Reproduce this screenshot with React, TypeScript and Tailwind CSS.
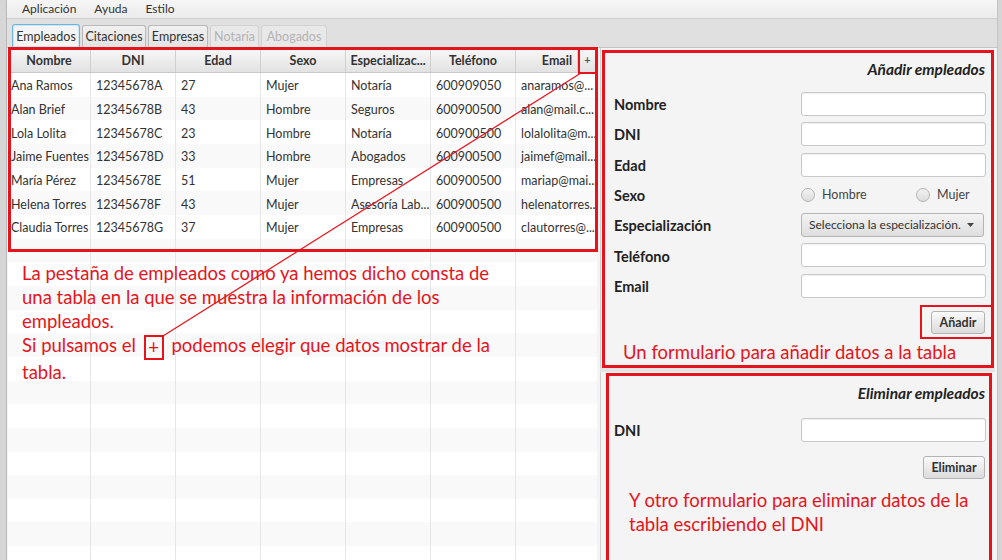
import React from "react";

const rows: string[][] = [
  ["Ana Ramos", "12345678A", "27", "Mujer", "Notaría", "600909050", "anaramos@..."],
  ["Alan Brief", "12345678B", "43", "Hombre", "Seguros", "600900500", "alan@mail.c..."],
  ["Lola Lolita", "12345678C", "23", "Hombre", "Notaría", "600900500", "lolalolita@m..."],
  ["Jaime Fuentes", "12345678D", "33", "Hombre", "Abogados", "600900500", "jaimef@mail..."],
  ["María Pérez", "12345678E", "51", "Mujer", "Empresas", "600900500", "mariap@mai..."],
  ["Helena Torres", "12345678F", "43", "Mujer", "Asesoría Lab...", "600900500", "helenatorres..."],
  ["Claudia Torres", "12345678G", "37", "Mujer", "Empresas", "600900500", "clautorres@..."],
];

const colW = [83, 85, 85, 85, 85, 85, 81];
const headers = ["Nombre", "DNI", "Edad", "Sexo", "Especializac...", "Teléfono"];

const RED = "#e5141c";

function TextField() {
  return (
    <div className="w-[185px] h-[24px] bg-white border border-[#c8c8c8] rounded-[3px] shadow-[inset_0_1px_1px_rgba(0,0,0,0.06)]" />
  );
}

function Btn({ children, w }: { children: React.ReactNode; w: string }) {
  return (
    <div
      className={`${w} h-[23px] flex items-center justify-center pt-[1px] rounded-[3px] border border-[#b3b3b3] bg-gradient-to-b from-[#fafafa] to-[#dcdcdc] text-[12.5px] font-bold text-[#333]`}
    >
      {children}
    </div>
  );
}

function Radio({ label, w }: { label: string; w?: string }) {
  return (
    <div className={`flex items-center gap-[7px] ${w ?? ""}`}>
      <div className="w-[14px] h-[14px] rounded-full border border-[#b5b5b5] bg-gradient-to-b from-[#f2f2f2] to-[#dcdcdc]" />
      <span className="text-[12.5px] text-[#444]">{label}</span>
    </div>
  );
}

function FormRow({ label, children }: { label: string; children: React.ReactNode }) {
  return (
    <div className="flex items-center h-[24px] mt-[6.3px] first:mt-0">
      <div className="w-[187px] pt-[2px] text-[14.5px] font-bold text-[#222]">{label}</div>
      {children}
    </div>
  );
}

export default function App() {
  const bodyRows = Array.from({ length: 21 }, (_, i) => rows[i] ?? null);
  return (
    <div className="relative w-[1002px] h-[560px] overflow-hidden flex bg-[#f4f4f4] font-['Lato',sans-serif] text-[#333]">
      {/* left window frame */}
      <div className="w-[7px] h-full bg-[#d6d6d6] border-r border-[#b9b9b9]" />

      <div className="w-[990px] h-full flex flex-col">
        {/* menu bar */}
        <div className="h-[19px] shrink-0 flex items-center gap-[18px] pl-[15px] bg-gradient-to-b from-[#f6f6f6] to-[#ebebeb] border-b border-[#cfcfcf] text-[12px] text-[#333]">
          <span>Aplicación</span>
          <span>Ayuda</span>
          <span>Estilo</span>
        </div>

        {/* tab header */}
        <div className="h-[29px] shrink-0 flex items-end gap-[2px] pl-[5px] bg-[#e0e0e0] border-b border-[#c4c4c4] text-[12.5px]">
          <div className="w-[68px] h-[23px] pt-[3px] flex items-center justify-center rounded-t-[3px] border border-b-0 border-[#6fb6dc] bg-[#f4f4f4] text-[#333] shadow-[inset_0_0_0_1px_#cde6f3]">
            Empleados
          </div>
          <div className="w-[64px] h-[22px] pt-[2px] flex items-center justify-center rounded-t-[3px] border border-b-0 border-[#b9b9b9] bg-gradient-to-b from-[#f1f1f1] to-[#e2e2e2] text-[#333]">
            Citaciones
          </div>
          <div className="w-[60px] h-[22px] pt-[2px] flex items-center justify-center rounded-t-[3px] border border-b-0 border-[#b9b9b9] bg-gradient-to-b from-[#f1f1f1] to-[#e2e2e2] text-[#333]">
            Empresas
          </div>
          <div className="w-[49px] h-[22px] pt-[2px] flex items-center justify-center rounded-t-[3px] border border-b-0 border-[#d2d2d2] bg-[#e8e8e8] text-[#b3b3b3]">
            Notaría
          </div>
          <div className="w-[66px] h-[22px] pt-[2px] flex items-center justify-center rounded-t-[3px] border border-b-0 border-[#d2d2d2] bg-[#e8e8e8] text-[#b3b3b3]">
            Abogados
          </div>
        </div>

        {/* content */}
        <div className="flex-1 flex min-h-0">
          {/* table */}
          <div className="ml-[1px] w-[589px] h-full flex flex-col bg-white overflow-hidden text-[12.5px]">
            <div className="h-[25px] shrink-0 flex bg-gradient-to-b from-[#f8f8f8] to-[#e2e2e2] border-b border-[#c8c8c8]">
              {headers.map((h, i) => (
                <div
                  key={h}
                  style={{ width: colW[i] }}
                  className="h-full pt-[2px] flex items-center justify-center font-bold text-[#333] border-r border-[#cfcfcf]"
                >
                  {h}
                </div>
              ))}
              <div className="w-[62px] h-full pt-[2px] flex items-center justify-end pr-[5px] font-bold text-[#333] border-r border-[#cfcfcf]">
                Email
              </div>
              <div className="w-[19px] h-full flex items-center justify-center font-bold text-[#555] text-[11px]">
                +
              </div>
            </div>
            {bodyRows.map((r, ri) => (
              <div
                key={ri}
                className={`h-[23.67px] shrink-0 flex ${ri % 2 === 0 ? "bg-white" : "bg-[#f9f9f9]"}`}
              >
                {colW.map((w, ci) => (
                  <div
                    key={ci}
                    style={{ width: w }}
                    className={`h-full pt-[4px] flex items-center whitespace-nowrap text-[#333] ${ci === 0 ? "pl-[3px]" : "pl-[5px]"} ${ci < 6 ? "border-r border-[#e6e6e6]" : ""}`}
                  >
                    {r ? r[ci] : ""}
                  </div>
                ))}
              </div>
            ))}
          </div>

          {/* right column */}
          <div className="ml-[3px] w-[395px] h-full flex flex-col gap-[4px] bg-[#e4e4e4]">
            <div className="h-[320px] shrink-0 bg-[#f4f4f4] border-l border-[#d0d0d0] pl-[13px] pt-[12px]">
              <div className="h-[20px] pr-[10px] flex items-center justify-end text-[15.5px] font-bold italic text-[#222]">
                Añadir empleados
              </div>
              <div className="mt-[12px] flex flex-col">
                <FormRow label="Nombre">
                  <TextField />
                </FormRow>
                <FormRow label="DNI">
                  <TextField />
                </FormRow>
                <FormRow label="Edad">
                  <TextField />
                </FormRow>
                <FormRow label="Sexo">
                  <div className="flex">
                    <Radio label="Hombre" w="w-[115px]" />
                    <Radio label="Mujer" />
                  </div>
                </FormRow>
                <FormRow label="Especialización">
                  <div className="w-[183px] h-[24px] flex items-center justify-between pl-[7px] pr-[9px] rounded-[3px] border border-[#b5b5b5] bg-gradient-to-b from-[#f3f3f3] to-[#dedede] text-[12px] text-[#333] whitespace-nowrap">
                    <span>Selecciona la especialización.</span>
                    <svg width="7" height="4" viewBox="0 0 7 4">
                      <path d="M0 0h7L3.5 4z" fill="#444" />
                    </svg>
                  </div>
                </FormRow>
                <FormRow label="Teléfono">
                  <TextField />
                </FormRow>
                <FormRow label="Email">
                  <TextField />
                </FormRow>
              </div>
              <div className="mt-[13.5px] flex justify-end pr-[10px]">
                <Btn w="w-[54px]">Añadir</Btn>
              </div>
            </div>
            <div className="flex-1 bg-[#f4f4f4] border-l border-[#d0d0d0] pl-[13px] pt-[12px]">
              <div className="h-[20px] pr-[10px] flex items-center justify-end text-[15.5px] font-bold italic text-[#222]">
                Eliminar empleados
              </div>
              <div className="mt-[14px] flex flex-col">
                <FormRow label="DNI">
                  <TextField />
                </FormRow>
              </div>
              <div className="mt-[14px] flex justify-end pr-[10px]">
                <Btn w="w-[62px]">Eliminar</Btn>
              </div>
            </div>
          </div>
        </div>
      </div>

      {/* right window frame */}
      <div className="w-[5px] h-full bg-[#d6d6d6] border-l border-[#c4c4c4]" />

      {/* annotation overlay */}
      <div className="absolute inset-0 pointer-events-none" style={{ color: RED }}>
        <div className="absolute left-[8px] top-[47px] w-[590px] h-[205px] border-[3px]" style={{ borderColor: RED }} />
        <div className="absolute left-[578px] top-[47px] w-[19px] h-[27px] border-2" style={{ borderColor: RED }} />
        <div className="absolute left-[602px] top-[50px] w-[392px] h-[318px] border-[3px]" style={{ borderColor: RED }} />
        <div className="absolute left-[920px] top-[305px] w-[74px] h-[34px] border-2" style={{ borderColor: RED }} />
        <div className="absolute left-[606px] top-[373px] w-[386px] h-[200px] border-[3px]" style={{ borderColor: RED }} />
        <svg className="absolute left-0 top-0" width="1002" height="560">
          <line x1="581" y1="73" x2="163" y2="336" stroke={RED} strokeWidth="1.2" />
        </svg>
        <div className="absolute left-[22px] top-[261px] text-[18.5px] leading-[24px] whitespace-nowrap">
          La pestaña de empleados como ya hemos dicho consta de
          <br />
          una tabla en la que se muestra la información de los
          <br />
          empleados.
          <br />
          Si pulsamos el{" "}
          <span className="inline-block w-[20px] h-[25px] leading-[21px] text-center border-2 align-middle mx-[3px]" style={{ borderColor: RED }}>
            +
          </span>{" "}
          podemos elegir que datos mostrar de la
          <br />
          tabla.
        </div>
        <div className="absolute left-[623px] top-[340px] text-[18.5px] leading-[24px] whitespace-nowrap">
          Un formulario para añadir datos a la tabla
        </div>
        <div className="absolute left-[629px] top-[488px] text-[18.5px] leading-[24px] whitespace-nowrap">
          Y otro formulario para eliminar datos de la
          <br />
          tabla escribiendo el DNI
        </div>
      </div>
    </div>
  );
}
